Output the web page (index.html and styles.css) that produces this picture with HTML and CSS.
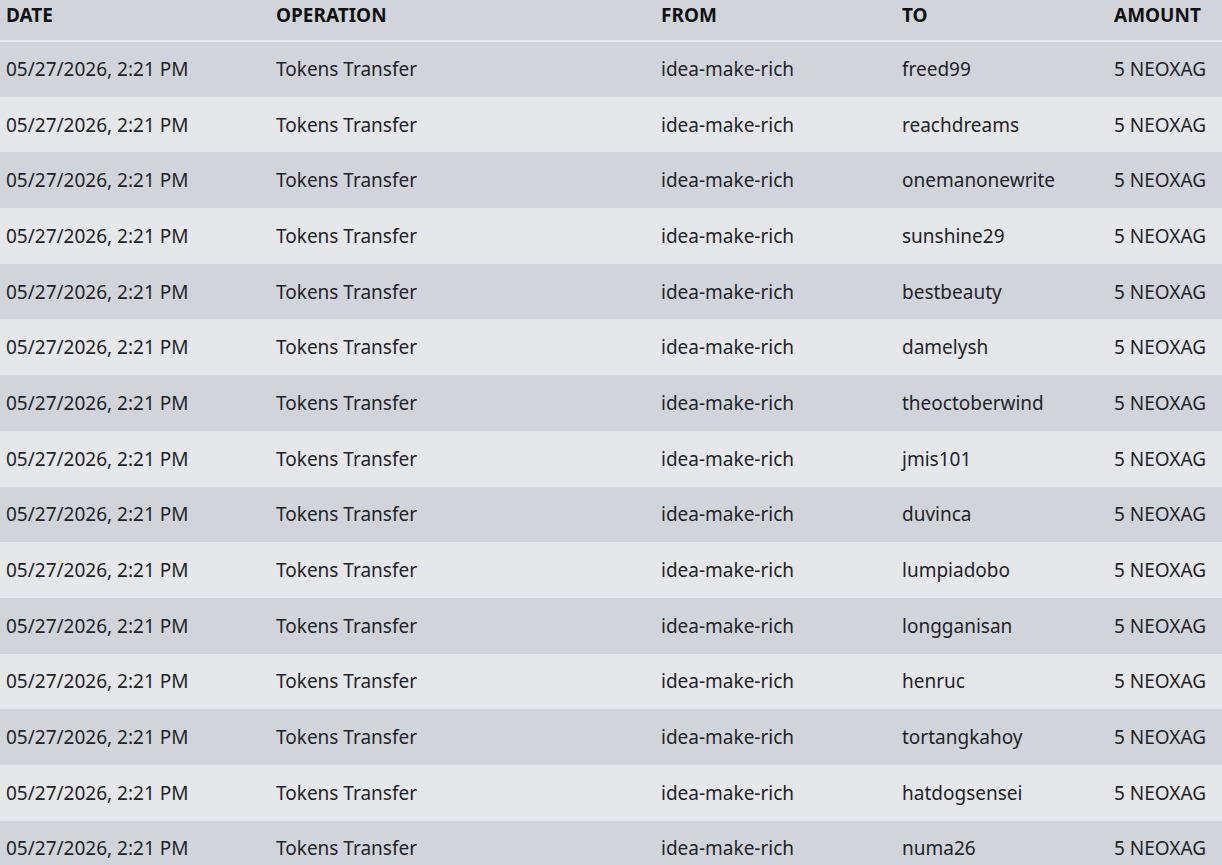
FILE: index.html
```html
<!DOCTYPE html>
<html lang="en">
<head>
  <meta charset="UTF-8" />
  <meta name="viewport" content="width=device-width, initial-scale=1.0" />
  <title>Transfers</title>
  <link rel="stylesheet" href="styles.css">
</head>
<body>
  <table class="history">
    <thead>
      <tr>
        <th class="col-date">DATE</th>
        <th class="col-op">OPERATION</th>
        <th class="col-from">FROM</th>
        <th class="col-to">TO</th>
        <th class="col-amount">AMOUNT</th>
      </tr>
    </thead>
    <tbody>
      <tr><td>05/27/2026, 2:21 PM</td><td>Tokens Transfer</td><td>idea-make-rich</td><td>freed99</td><td>5 NEOXAG</td></tr>
      <tr><td>05/27/2026, 2:21 PM</td><td>Tokens Transfer</td><td>idea-make-rich</td><td>reachdreams</td><td>5 NEOXAG</td></tr>
      <tr><td>05/27/2026, 2:21 PM</td><td>Tokens Transfer</td><td>idea-make-rich</td><td>onemanonewrite</td><td>5 NEOXAG</td></tr>
      <tr><td>05/27/2026, 2:21 PM</td><td>Tokens Transfer</td><td>idea-make-rich</td><td>sunshine29</td><td>5 NEOXAG</td></tr>
      <tr><td>05/27/2026, 2:21 PM</td><td>Tokens Transfer</td><td>idea-make-rich</td><td>bestbeauty</td><td>5 NEOXAG</td></tr>
      <tr><td>05/27/2026, 2:21 PM</td><td>Tokens Transfer</td><td>idea-make-rich</td><td>damelysh</td><td>5 NEOXAG</td></tr>
      <tr><td>05/27/2026, 2:21 PM</td><td>Tokens Transfer</td><td>idea-make-rich</td><td>theoctoberwind</td><td>5 NEOXAG</td></tr>
      <tr><td>05/27/2026, 2:21 PM</td><td>Tokens Transfer</td><td>idea-make-rich</td><td>jmis101</td><td>5 NEOXAG</td></tr>
      <tr><td>05/27/2026, 2:21 PM</td><td>Tokens Transfer</td><td>idea-make-rich</td><td>duvinca</td><td>5 NEOXAG</td></tr>
      <tr><td>05/27/2026, 2:21 PM</td><td>Tokens Transfer</td><td>idea-make-rich</td><td>lumpiadobo</td><td>5 NEOXAG</td></tr>
      <tr><td>05/27/2026, 2:21 PM</td><td>Tokens Transfer</td><td>idea-make-rich</td><td>longganisan</td><td>5 NEOXAG</td></tr>
      <tr><td>05/27/2026, 2:21 PM</td><td>Tokens Transfer</td><td>idea-make-rich</td><td>henruc</td><td>5 NEOXAG</td></tr>
      <tr><td>05/27/2026, 2:21 PM</td><td>Tokens Transfer</td><td>idea-make-rich</td><td>tortangkahoy</td><td>5 NEOXAG</td></tr>
      <tr><td>05/27/2026, 2:21 PM</td><td>Tokens Transfer</td><td>idea-make-rich</td><td>hatdogsensei</td><td>5 NEOXAG</td></tr>
      <tr><td>05/27/2026, 2:21 PM</td><td>Tokens Transfer</td><td>idea-make-rich</td><td>numa26</td><td>5 NEOXAG</td></tr>
    </tbody>
  </table>
</body>
</html>
```

FILE: styles.css
```css
body {
  margin: 0;
  font-family: "Noto Sans", Arial, sans-serif;
  background: #e5e7eb;
  color: #1f2328;
  overflow: hidden;
}

.history {
  width: 1222px;
  border-collapse: collapse;
  table-layout: fixed;
}

.history th,
.history td {
  padding: 0 6px;
  text-align: left;
  white-space: nowrap;
}

.history thead tr {
  height: 41px;
  background: #d1d5db;
  border-bottom: 2px solid #e8eaee;
}

.history th {
  font-size: 19px;
  font-weight: 700;
  color: #111;
  vertical-align: top;
  padding-top: 2px;
}

.col-date { width: 258px; }
.col-op { width: 373px; }
.col-from { width: 229px; }
.col-to { width: 200px; }
.col-amount { width: auto; }

.history tbody tr {
  height: 55.7px;
}

.history td {
  font-size: 19px;
}

.history tbody tr:nth-child(odd) {
  background: #d1d5db;
}

.history tbody tr:nth-child(even) {
  background: #e5e7eb;
}
```
